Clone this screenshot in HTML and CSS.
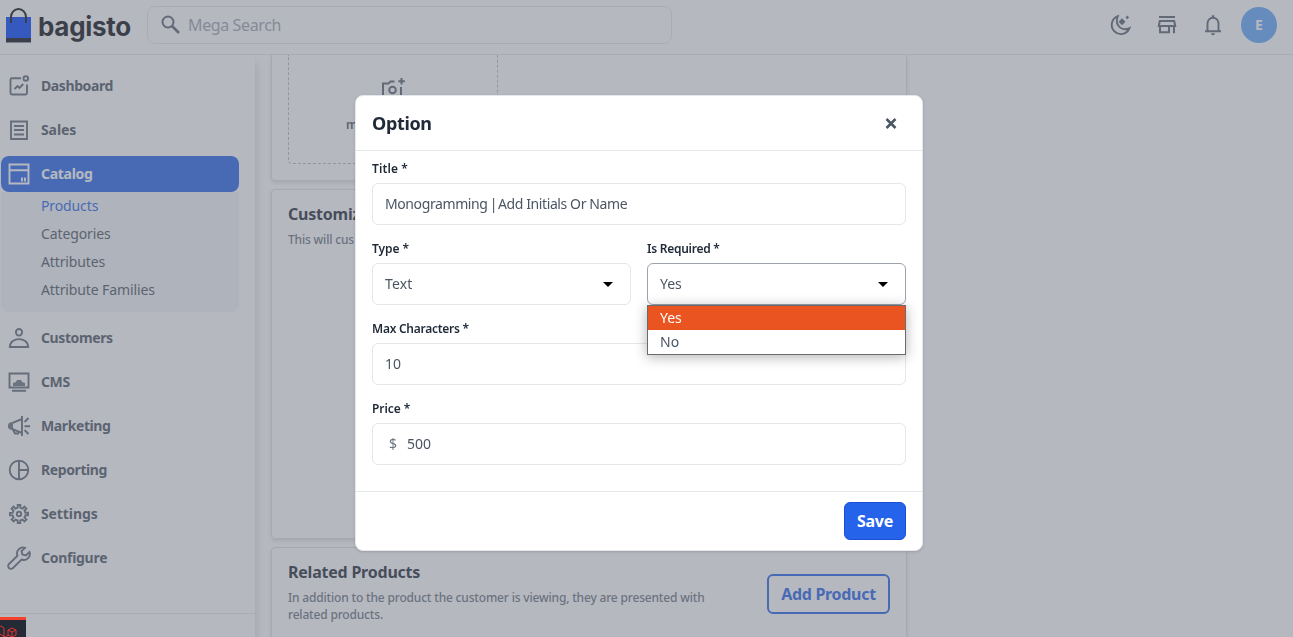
FILE: index.html
```html
<!DOCTYPE html>
<html lang="en">
<head>
<meta charset="utf-8">
<title>Bagisto Admin</title>
<link rel="stylesheet" href="styles.css">
</head>
<body>
<header class="topbar">
  <div class="brand">
    <svg class="brand-icon" width="26" height="36" viewBox="0 0 26 36"><path fill="#0041ff" d="M0 10h25v21H0z"/><path fill="#0a0c14" d="M0 31h25v4H0z"/><path fill="#8b909b" d="M0 35h25v1H0z"/><path d="M5 16v-6a7.5 8 0 0 1 15 0v6" fill="none" stroke="#0a0c14" stroke-width="2"/></svg>
    <span class="brand-name">bagisto</span>
  </div>
  <div class="search">
    <svg width="20" height="20" viewBox="0 0 20 20" fill="none" stroke="#596270"><circle cx="7" cy="7" r="5.500" stroke-width="2"/><path d="M11 11 18 18" stroke-width="2.600"/></svg>
    <span class="search-text">Mega Search</span>
  </div>
  <div class="tools">
    <svg width="24" height="24" viewBox="0 0 24 24" fill="none" stroke="#596270" stroke-width="1.900"><path d="M8.800 3.200A9.200 9.200 0 1 0 20.500 15.200C13.500 18.500 5 13 8.800 3.200z"/><path d="M13 5.200 16.500 8.700 13 12.200 9.500 8.700z" fill="#596270" stroke="none"/><path d="M18.300 2.600 20.100 4.400 18.300 6.200 16.500 4.400z" fill="#596270" stroke="none"/></svg>
    <svg width="24" height="24" viewBox="0 0 24 24" fill="none" stroke="#596270" stroke-width="2"><path d="M4 4h16M4.800 8h14.400l1 5H3.800zM5 13v6.200h9V13M19 13v7.200"/></svg>
    <svg width="24" height="24" viewBox="0 0 24 24" fill="none" stroke="#596270" stroke-width="1.900"><path d="M4 18.200h16M6.500 18v-7.500a5.500 5.800 0 0 1 11 0V18"/><path d="M10.800 2.300h2.400v3h-2.400zM10 20.200h4a2 2 0 0 1-4 0z" fill="#596270" stroke="none"/></svg>
    <span class="avatar">E</span>
  </div>
</header>
<div class="shell">
  <nav class="sidebar">
    <div class="menu">
      <a class="item"><svg class="ic" viewBox="0 0 24 24"><path d="M14 4.200H5Q3.500 4.200 3.500 5.700V19q0 1.500 1.500 1.500h13.500q1.500 0 1.500-1.500v-8.500"/><circle cx="18.800" cy="4.500" r="2.300"/><path d="m7.500 15 3-3 2 2 3.700-4"/></svg><span>Dashboard</span></a>
      <a class="item"><svg class="ic" viewBox="0 0 24 24"><path d="M4 3.500h16v17.500H4zM7 8h10M7 12h10M7 16.500h10"/></svg><span class="sales">Sales</span></a>
      <a class="item active"><svg class="ic" viewBox="0 0 24 24"><path d="M2.500 2.500h19v19h-19zM2.500 8.200h19M15 15.500v4M18 15.500v4"/></svg><span>Catalog</span></a>
      <div class="submenu">
        <a class="current">Products</a>
        <a>Categories</a>
        <a>Attributes</a>
        <a>Attribute Families</a>
      </div>
      <a class="item"><svg class="ic" viewBox="0 0 24 24"><ellipse cx="12" cy="6.300" rx="3.100" ry="3.300"/><path d="M2.800 21c.5-10.500 17.900-10.500 18.400 0z"/></svg><span>Customers</span></a>
      <a class="item"><svg class="ic" viewBox="0 0 24 24"><path d="M2.500 3.500h19v14h-19zM5 20.800h14"/><path d="M6 16v-3l3-1 1-2h4l1 2 3 1v3z" fill="#6b7280" stroke="none"/></svg><span>CMS</span></a>
      <a class="item"><svg class="ic" viewBox="0 0 24 24"><path d="M15 2v20M15 5 5 9.200v5.600L15 19M6 16l2 3.500h4"/><path d="M17.500 8l4-4M17.500 12.200h5.500M17.500 16l4 4"/><path d="M5 8.500H2.500L1 10.500v3l1.500 2H5z" fill="#6b7280" stroke="none"/></svg><span>Marketing</span></a>
      <a class="item"><svg class="ic" viewBox="0 0 24 24"><circle cx="12" cy="12" r="9.300"/><path d="M12 2.500v19M12 12h9.300"/></svg><span>Reporting</span></a>
      <a class="item"><svg class="ic gear" viewBox="0 0 24 24"><path d="M10.700 3h2.600v2.700l2.200.9 1.900-1.900 2 2-1.900 1.900.9 2.200H21v2.500h-2.600l-.9 2.200 1.900 1.900-2 2-1.900-1.900-2.200.9V21h-2.600v-2.500l-2.200-.9-1.900 1.900-2-2 1.900-1.900-.9-2.200H3v-2.500h2.600l.9-2.300-1.900-1.900 2-2 1.900 1.900 2.200-.9z"/><circle cx="12" cy="12" r="2.200"/></svg><span class="settings">Settings</span></a>
      <a class="item"><svg class="ic" viewBox="0 0 24 24"><path d="M18 1.800a6 6 0 0 0-7.500 8L2 18a2.800 2.800 0 0 0 4 4l8.500-8.500a6 6 0 0 0 8-7.500L19 9.500l-3.700-1-.8-3.500z"/></svg><span class="configure">Configure</span></a>
    </div>
    <div class="collapse"></div>
  </nav>
  <main class="content">
    <section class="card images">
      <div class="dropzone">
        <svg width="24" height="24" viewBox="0 0 24 24" fill="none" stroke="#596270" stroke-width="2"><path d="M13.500 5.500H9.500L7.500 7.500H2v14h18V11"/><circle cx="11.500" cy="14" r="3.300"/><path d="M20.500 2v6.500M17.300 5.200h6.500"/></svg>
        <span class="dz-text">m</span>
      </div>
    </section>
    <section class="card custom">
      <h2>Customiz</h2>
      <p class="note">This will cus</p>
    </section>
    <section class="card related">
      <div class="related-text">
        <h2>Related Products</h2>
        <p class="note">In addition to the product the customer is viewing, they are presented with<br>related products.</p>
      </div>
      <button class="outline-btn">Add Product</button>
    </section>
  </main>
</div>
<div class="overlay">
  <div class="modal">
    <div class="modal-head"><span class="modal-title">Option</span><svg width="12" height="12" viewBox="0 0 12 12"><path d="m1.500 2 9 9m0-9-9 9" stroke="#4b5563" stroke-width="2.500"/></svg></div>
    <div class="modal-body">
      <div class="field wide"><label class="loose">Title *</label><div class="input long">Monogramming<span class="pipe"> | </span>Add Initials Or Name</div></div>
      <div class="field"><label>Type *</label><div class="input select"><span class="type-value">Text</span><i class="caret"></i></div></div>
      <div class="field"><label class="tight">Is Required *</label><div class="input select open"><span>Yes</span><i class="caret"></i></div>
        <div class="options"><div class="option picked">Yes</div><div class="option">No</div></div>
      </div>
      <div class="field wide"><label class="tight">Max Characters *</label><div class="input">10</div></div>
      <div class="field wide"><label>Price *</label><div class="input price"><span class="cur">$</span><span>500</span></div></div>
    </div>
    <div class="modal-foot"><button class="save">Save</button></div>
  </div>
</div>
<div class="debugbar"><svg width="26" height="18" viewBox="0 0 26 18" fill="none" stroke="#e0362c" stroke-width="1"><path d="M-2 8 1 6l3 2v9M8 10l4-2 4 2v5l-4 2-4-2zl4 2 4-2M12 12v5M0 14l5 3 4-2"/></svg></div>
</body>
</html>
```
FILE: styles.css
```css
* { box-sizing: border-box; }
body { margin: 0; height: 637px; overflow: hidden; background: #fff; color: #4b5563; font-family: "Noto Sans", sans-serif; font-size: 14px; line-height: 20px; }
svg { display: block; flex: none; }
.topbar { display: flex; align-items: center; height: 55px; padding: 0 16px 4px 6px; border-bottom: 1px solid #e5e7eb; position: relative; z-index: 2; background: #fff; }
.brand { display: flex; width: 141px; gap: 6px; height: 42px; align-items: center; }
.brand-name { padding-top: 3px; font: 700 26px/30px "Inter", sans-serif; letter-spacing: -.3px; color: #0a0c14; white-space: nowrap; }
.search { display: flex; gap: 7px; align-items: center; width: 525px; height: 38px; padding: 0 0 1px 13px; border: 1px solid #e5e7eb; border-radius: 8px; }
.search-text { font-size: 16px; line-height: 24px; letter-spacing: -.38px; color: #9ca3af; }
.tools { display: flex; align-items: center; margin-left: auto; gap: 22px; }
.avatar { width: 36px; height: 36px; margin-left: -6px; border-radius: 50%; background: #60a5fa; color: #fff; display: flex; align-items: center; justify-content: center; font-weight: 700; }
.shell { display: flex; height: 582px; }
.sidebar { width: 255px; display: flex; flex-direction: column; flex: none; box-shadow: 0 8px 10px rgba(0,0,0,.2); }
.menu { height: 558px; padding: 13px 16px 0 1px; display: flex; flex-direction: column; gap: 8px; }
.item { display: flex; align-items: center; gap: 10px; height: 36px; padding-left: 6px; border-radius: 8px; font-weight: 700; letter-spacing: -.4px; flex: none; }
.item .sales, .item .settings { letter-spacing: -.1px; }
.item .configure { letter-spacing: -.28px; }
.item.active { background: #2563eb; color: #fff; margin-bottom: -8px; letter-spacing: -.3px; }
.ic { width: 24px; height: 24px; fill: none; stroke: #5f6876; stroke-width: 1.9; }
.active .ic { stroke: #fff; }
.submenu { height: 120px; background: #f3f4f6; border-radius: 0 0 8px 8px; padding-left: 40px; flex: none; letter-spacing: -.12px; }
.submenu a { display: block; line-height: 28px; }
.submenu .current { color: #2563eb; }
.collapse { height: 24px; border-top: 1px solid #e5e7eb; }
.content { width: 636px; margin-left: 16px; display: flex; flex-direction: column; gap: 8px; }
.card { border: 1px solid #e0e1e6; border-radius: 4px; box-shadow: 0 2px 4px rgba(0,0,0,.13); padding: 0 16px; flex: none; }
.images { height: 126px; border-top: 0; border-radius: 0 0 4px 4px; }
.dropzone { width: 210px; height: 109px; border: 1px dashed #b8bbc1; border-top: 0; border-radius: 0 0 4px 4px; padding-top: 21px; display: flex; flex-direction: column; align-items: center; gap: 16px; }
.dz-text { font-size: 12px; line-height: 17px; font-weight: 600; width: 94px; }
.custom { height: 350px; padding-top: 12px; }
h2 { margin: 0; font-size: 16px; line-height: 24px; font-weight: 700; letter-spacing: -.22px; color: #1f2937; white-space: nowrap; }
.note { margin: 5px 0 0; font-size: 12px; line-height: 17px; font-weight: 500; letter-spacing: -.179px; color: #6b7280; white-space: nowrap; }
.related { height: 110px; display: flex; justify-content: space-between; padding-top: 12px; }
.outline-btn { width: 123px; height: 40px; margin-top: 14px; padding: 0; background: transparent; border: 2px solid #2563eb; border-radius: 6px; color: #2563eb; font: 700 16px/24px "Noto Sans", sans-serif; letter-spacing: -.3px; white-space: nowrap; }
.overlay { position: fixed; inset: 0; z-index: 5; background: rgba(107,114,128,.5); padding-top: 95px; }
.modal { width: 568px; height: 456px; margin-left: 355px; background: #fff; border: 1px solid #e5e7eb; border-radius: 8px; box-shadow: 0 1px 3px rgba(0,0,0,.15); }
.modal-head { height: 55px; padding: 0 25px 0 16px; border-bottom: 1px solid #e5e7eb; display: flex; align-items: center; justify-content: space-between; }
.modal-title { font-size: 18px; font-weight: 700; letter-spacing: -.35px; color: #1f2937; }
.modal-body { display: grid; grid-template-columns: 259px 259px; column-gap: 16px; grid-auto-rows: 80px; padding: 8px 16px 0; height: 340px; }
.field { position: relative; }
.wide { grid-column: 1 / 3; }
label { display: block; height: 24px; padding-top: 1px; font-size: 12px; line-height: 17px; font-weight: 600; letter-spacing: -.08px; color: #1f2937; }
.loose { letter-spacing: .1px; }
.tight { letter-spacing: -.26px; }
.input { display: flex; align-items: center; height: 42px; padding: 0 12px; border: 1px solid #e5e7eb; border-radius: 6px; white-space: pre; }
.long { letter-spacing: -.4px; }
.pipe { letter-spacing: -1.5px; }
.type-value { letter-spacing: .15px; }
.select { justify-content: space-between; padding-right: 17px; }
.open { border-color: #9ca3af; }
.caret { border: 5px solid transparent; border-top-color: #000; border-bottom: 0; }
.options { position: absolute; z-index: 2; top: 66px; left: 0; width: 259px; height: 50px; background: #fff; border: 1px solid #6b6b6b; box-shadow: 0 2px 12px rgba(0,0,0,.3); }
.option { height: 24px; padding: 1px 12px; line-height: 22px; }
.picked { background: #e95420; color: #fff; }
.price { padding-left: 16px; gap: 10px; }
.cur { color: #6b7280; }
.modal-foot { height: 59px; border-top: 1px solid #e5e7eb; padding: 10px 16px; text-align: right; }
.save { width: 62px; height: 38px; padding: 0; background: #2563eb; border: 1px solid #1d4ed8; border-radius: 6px; color: #fff; font: 700 16px/24px "Noto Sans", sans-serif; letter-spacing: -.3px; text-align: center; }
.debugbar { position: fixed; z-index: 6; left: 0; bottom: 0; width: 26px; height: 20px; background: #252a37; border-top: 3px solid #f4402d; overflow: hidden; }
```
